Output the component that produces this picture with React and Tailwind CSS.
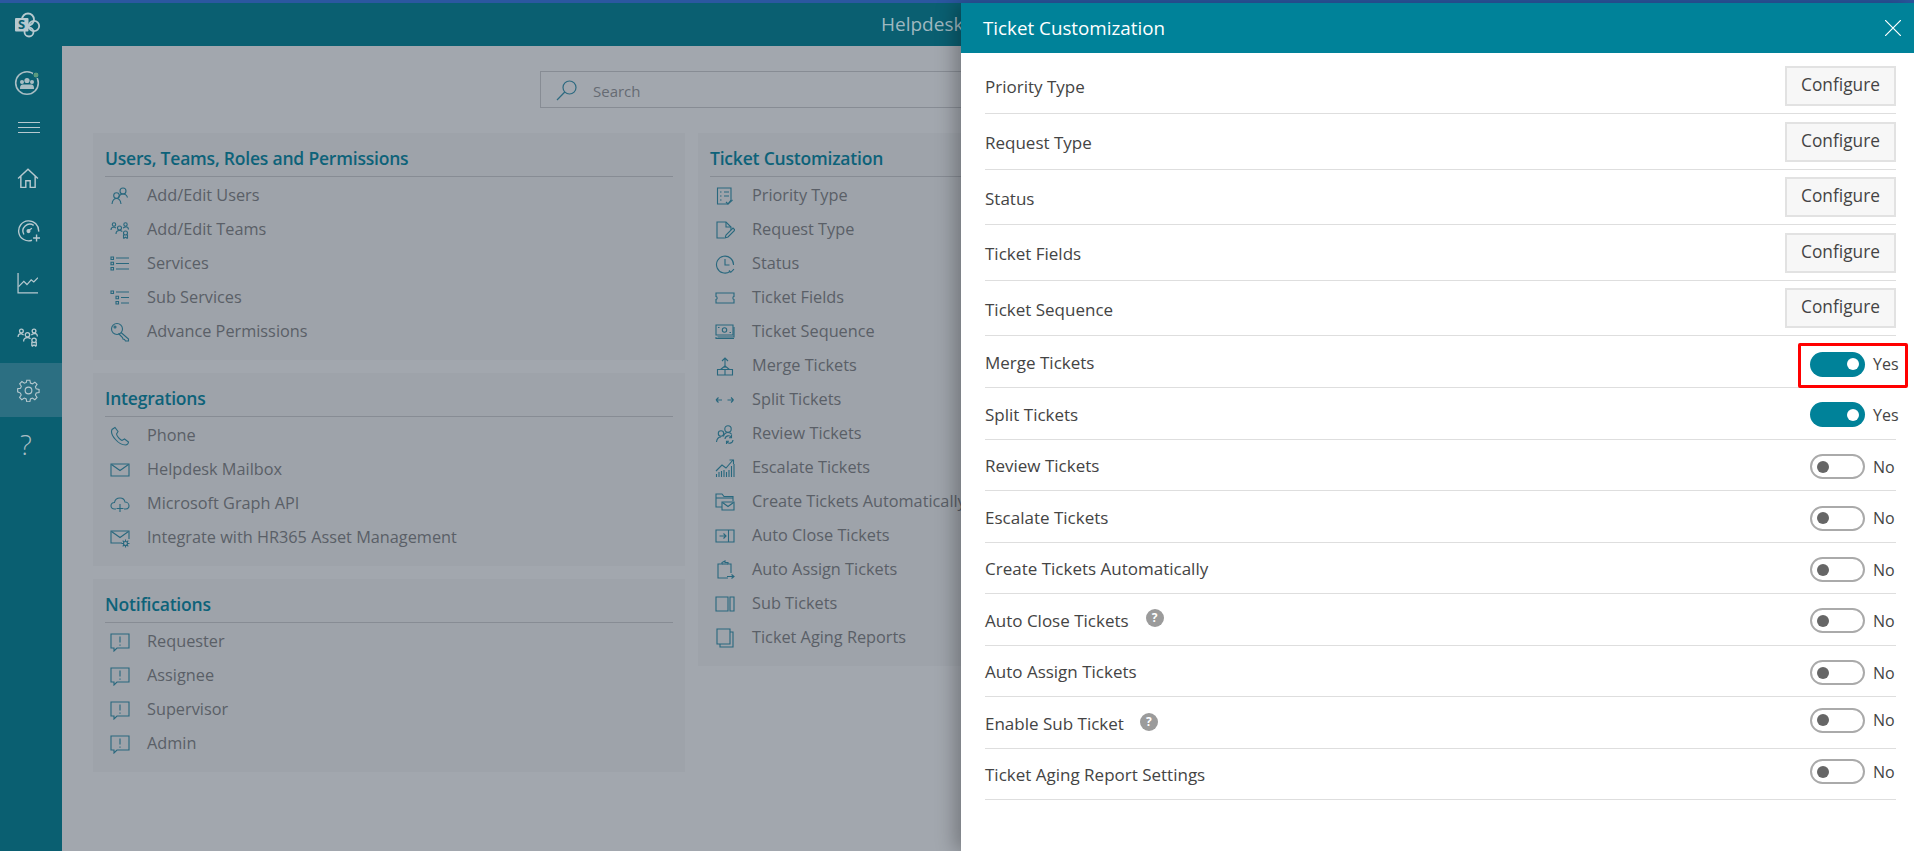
const FONT = "font-['Open_Sans',sans-serif]"

function Ico({ children, size = 20, view = 20, stroke = '#29687e', width = 1.1 }) {
  return (
    <svg width={size} height={size} viewBox={`0 0 ${view} ${view}`} fill="none" stroke={stroke} strokeWidth={width} className="shrink-0">
      {children}
    </svg>
  )
}

const itemIcons = {
  users: <><circle cx="13" cy="5" r="3" /><path d="M8.500 12c.6-2.400 2.400-4 4.500-4s3.800 1.200 4.500 3.500" /><circle cx="6.500" cy="9.500" r="2.800" /><path d="M2 18c.4-3 2.200-5.500 4.500-5.500S10.600 15 11 18" /></>,
  teams: <><circle cx="4" cy="4.500" r="1.700" /><circle cx="15.500" cy="4.500" r="1.700" /><circle cx="9.500" cy="8" r="2" /><path d="M1 10c0-2 1-3 3-3l2 1M18.500 9.500c0-2-1-2.800-3-2.800l-2.500 1.300M6 14c0-2.500 1.500-3.500 3.500-3.500 1.200 0 2 .3 2.800 1" /><circle cx="15.500" cy="13" r="2" /><path d="M13.500 18.500v-4M17.500 18.500v-4M13.500 18.500l2-1.300 2 1.300" /></>,
  services: <><path d="M1 3h2.500v2.500H1zM1 8.200h2.500v2.500H1zM1 13.500h2.500V16H1z" /><path d="M6 4h13M6 9.500h13M6 15h13" /></>,
  subservices: <><path d="M1 3h2.500v2.500H1zM6 8.200h2.500v2.500H6zM6 13.500h2.500V16H6z" /><path d="M6 4h13M11 9.500h8M11 15h8" /></>,
  key: <><circle cx="7" cy="7" r="5.500" /><circle cx="5" cy="5" r="1" /><path d="M11 10.500l7.500 6.500v2h-3l-1-1.500-1.500-.5-.5-1.500-4-4" /></>,
  phone: <path d="M5 1.500L2 3.500c-1 2 0 6 3.500 10s7 5.500 10 5.500c1.500 0 3-1.500 3-3l-4-3-2.500 1.500c-2-.7-5-4-5.500-6.500L8 5.500z" />,
  mail: <><path d="M1 4h18v12H1z" /><path d="M1.500 4.500L10 10.500l8.500-6" /></>,
  cloud: <><path d="M6 15H4.500C2.500 15 1 13.500 1 11.800s1.500-3.300 3.500-3.300C5 5.500 7.500 4 10 4s4.500 1.500 5 4c2 0 4 1.500 4 3.800S17.500 15 15.500 15H14" /><path d="M10 10v8M6.500 14.500h7" /></>,
  mailgear: <><path d="M12 15H1V3h18v8" /><path d="M1.500 3.500L10 9.500l8.500-6" /><circle cx="15.500" cy="15.500" r="2" /><path d="M15.500 11.500v2M15.500 17.500v2M11.500 15.500h2M17.500 15.500h2M12.700 12.700l1.400 1.400M16.900 16.900l1.400 1.400M18.300 12.700l-1.400 1.400M14.100 16.900l-1.400 1.400" /></>,
  alert: <><path d="M1 2h18v14H7l-3 3v-3H1z" strokeWidth="1.100" /><path d="M10 4.500v6M10 12.500v1.300" /></>,
  priority: <><path d="M2.500 2h13.500v12l-3 4h-10.500z" /><path d="M5 6h1.500M9 6h5M5 10h1.500M9 10h5M5 14h1.500" /><path d="M11 16l2 2 4.500-4" /></>,
  request: <><path d="M9 18H2V2h9l5 5v3" /><path d="M11 2v5h5" /><path d="M10 18l1-3 7-7 2 2-7 7z" /></>,
  status: <><path d="M15 17.500A8.500 8.500 0 1 1 18.500 11" /><path d="M10 5v6h4.500" /><path d="M14 16.500l1.800 1.800 3.200-3.200" /></>,
  ticket: <path d="M1 5h18v3.500c-1.500 0-1.500 3 0 3V15H1v-3.500c1.500 0 1.500-3 0-3z" />,
  money: <><path d="M1 3h17v10H1z" /><circle cx="9.500" cy="8" r="2.200" /><path d="M3 5.500h1.500M14.500 10.500H16" /><path d="M19 5v10H2.500M1 15v1.500h18" /></>,
  merge: <><path d="M10 12V2M7 5l3-3 3 3" /><path d="M10 10l-4.500 3.500M10 10l4.500 3.500" /><path d="M2.500 13.500h7.500V19H2.500zM10 13.500h7.500V19H10z" /></>,
  split: <><path d="M1 10h6M1 10l2.500-2.500M1 10l2.500 2.500M12.500 10h6M18.500 10L16 7.500M18.500 10L16 12.500" strokeWidth="1.100" /></>,
  review: <><circle cx="13" cy="5" r="3.200" /><path d="M8.500 12.500c.6-2.700 2.400-4 4.500-4 1.500 0 3 .6 3.800 2" /><circle cx="6" cy="9.500" r="2.700" /><path d="M1.500 18c.4-3 2-5 4.500-5" /><path d="M10 15a3.500 3.500 0 0 1 6.500-1.500M18 16a3.500 3.500 0 0 1-6.500 1.500M16.500 11v2.700h-2.500M11.500 20v-2.700h2.500" /></>,
  escalate: <><path d="M1.500 19v-3M4 19v-5M6.500 19v-6M9 19v-7M11.500 19v-5M14 19v-7M16.500 19V8M19 19V6" /><path d="M1 13l6-6 4 3 7-8" /><path d="M14.500 2H18.500v4" /></>,
  folder: <><path d="M7 15H1V2h6l2 2.500h9V9" /><path d="M1 6h17" /><path d="M7 10h12v8H7z" /><path d="M7.500 10.500l5.500 4 5.500-4" /></>,
  close: <><path d="M1 4h18v12H1zM13.500 4v12" /><path d="M4.500 10H11M8.500 7.500L11 10l-2.500 2.500" /></>,
  assign: <><path d="M16 13V4h-3V2.500H10V1L7 2.500V4H3v14h10" /><path d="M7 4h6" /><path d="M12 16.500h7M16.500 14.500l2.500 2-2.500 2" /></>,
  sub: <><path d="M1 3h12v14H1zM15 3h4v14h-4z" /></>,
  aging: <><path d="M2 1h13v15H2z" /><path d="M15 4h3v15H5v-3" /></>,
}

const panels1 = [
  {
    title: 'Users, Teams, Roles and Permissions',
    items: [['users', 'Add/Edit Users'], ['teams', 'Add/Edit Teams'], ['services', 'Services'], ['subservices', 'Sub Services'], ['key', 'Advance Permissions']],
  },
  {
    title: 'Integrations',
    items: [['phone', 'Phone'], ['mail', 'Helpdesk Mailbox'], ['cloud', 'Microsoft Graph API'], ['mailgear', 'Integrate with HR365 Asset Management']],
  },
  {
    title: 'Notifications',
    items: [['alert', 'Requester'], ['alert', 'Assignee'], ['alert', 'Supervisor'], ['alert', 'Admin']],
  },
]

const ticketPanel = {
  title: 'Ticket Customization',
  items: [
    ['priority', 'Priority Type'], ['request', 'Request Type'], ['status', 'Status'], ['ticket', 'Ticket Fields'],
    ['money', 'Ticket Sequence'], ['merge', 'Merge Tickets'], ['split', 'Split Tickets'], ['review', 'Review Tickets'],
    ['escalate', 'Escalate Tickets'], ['folder', 'Create Tickets Automatically'], ['close', 'Auto Close Tickets'],
    ['assign', 'Auto Assign Tickets'], ['sub', 'Sub Tickets'], ['aging', 'Ticket Aging Reports'],
  ],
}

function SettingsPanel({ panel }) {
  return (
    <section className="bg-[#9ea3aa] px-3 pb-[11px] overflow-hidden">
      <h2 className="h-[44px] pt-[12px] border-b border-[#878c94] text-[17.500px] leading-[26px] font-semibold text-[#0d6279] tracking-[-0.2px]">{panel.title}</h2>
      <ul className="pt-[2px]">
        {panel.items.map(([icon, label]) => (
          <li key={label} className="h-[34px] flex items-center pl-[5px] gap-[17px] text-[16.300px] text-[#5a5f67] whitespace-nowrap">
            <Ico>{itemIcons[icon]}</Ico>
            <span className="-mt-[1px]">{label}</span>
          </li>
        ))}
      </ul>
    </section>
  )
}

function NavItem({ children }) {
  return <div className="h-[53px] flex items-center pl-[17px]">{children}</div>
}

function Sidebar() {
  const c = '#b7c9cf'
  return (
    <aside className="w-[62px] shrink-0 bg-[#0a5f71] flex flex-col">
      <div className="h-[44px] flex items-center pl-[14px] relative">
        <svg width="27" height="27" viewBox="0 0 27 27" fill="none">
          <circle cx="14" cy="7.500" r="6" stroke={c} strokeWidth="1.800" />
          <circle cx="20" cy="14" r="5.200" stroke={c} strokeWidth="1.800" />
          <circle cx="15" cy="20" r="4.500" stroke={c} strokeWidth="1.800" />
          <rect x="1" y="6" width="13.500" height="13.500" rx="1" fill={c} />
        </svg>
        <span className="absolute left-[18px] top-[11px] text-[13px] leading-[20px] font-bold text-[#0a5f71]">S</span>
      </div>
      <div className="h-[72px] flex items-center pl-[14px]">
        <svg width="26" height="26" viewBox="0 0 26 26" fill="none">
          <circle cx="13" cy="13" r="11.300" stroke="#a9bdc3" strokeWidth="1.600" />
          <circle cx="8" cy="12" r="2" fill="#a9bdc3" />
          <circle cx="18" cy="12" r="2" fill="#a9bdc3" />
          <circle cx="13" cy="10.500" r="2.600" fill="#a9bdc3" />
          <path d="M6 19c0-3.500 1-4.500 3-4.500h8c2 0 3 1 3 4.500z" fill="#a9bdc3" />
          <circle cx="22" cy="5" r="3" fill="#5a9a7e" stroke="#0a5f71" />
        </svg>
      </div>
      <div className="h-[32px] pl-[18px] pt-[3px] flex flex-col gap-[4px]">
        <div className="w-[22px] h-px bg-[#b7c9cf]" />
        <div className="w-[22px] h-px bg-[#b7c9cf]" />
        <div className="w-[22px] h-px bg-[#b7c9cf]" />
      </div>
      <NavItem>
        <Ico size={22} stroke={c} width={1.300}>
          <path d="M1 10.500L10 2l9 8.500M3.500 8.500V18.500h4.500v-6h4v6h4.500V8.500" />
        </Ico>
      </NavItem>
      <NavItem>
        <Ico size={23} stroke={c} width={1.200}>
          <path d="M13 18.500A8.700 8.700 0 1 1 18.800 11" />
          <path d="M14.500 5.500a6 6 0 0 0-8.500 8M10 10l3-2" />
          <circle cx="10" cy="10.500" r="1.200" fill={c} />
          <path d="M17 13.500v6M14 16.500h6" />
        </Ico>
      </NavItem>
      <NavItem>
        <Ico size={21} stroke={c} width={1.200}>
          <path d="M1 0v19h19" />
          <path d="M1.500 13l5-5 3 3 4-4.500 2.500 2 4-4" />
        </Ico>
      </NavItem>
      <NavItem>
        <Ico size={22} stroke={c} width={1.200}>{itemIcons.teams}</Ico>
      </NavItem>
      <div className="h-[54px] flex items-center pl-[17px] bg-[#2c6f82]">
        <svg width="23" height="23" viewBox="0 0 24 24" fill="none" stroke={c} strokeWidth="1.200">
          <circle cx="12" cy="12" r="3.500" />
          <path d="M10.300 1h3.400l.6 3.100 2.100.9 2.700-1.800 2.400 2.400-1.800 2.700.9 2.100 3.100.6v3.400l-3.100.6-.9 2.100 1.800 2.700-2.400 2.400-2.700-1.800-2.100.9-.6 3.100h-3.400l-.6-3.100-2.100-.9-2.700 1.800-2.400-2.400 1.800-2.700-.9-2.100L.4 13.700v-3.400l3.100-.6.9-2.100-1.800-2.700 2.400-2.400 2.700 1.800 2.100-.9z" transform="scale(.96) translate(.3 .3)" />
        </svg>
      </div>
      <NavItem>
        <span className="text-[28px] leading-none font-light text-[#a9bdc3] ml-[3px]">?</span>
      </NavItem>
    </aside>
  )
}

function Toggle({ on, label, shift = '' }) {
  return (
    <div className={`flex items-center ${shift}`}>
      <span className={`w-[55px] h-[25px] rounded-full flex items-center ${on ? 'bg-[#008299] justify-end pr-[6px]' : 'bg-white border-2 border-[#aaaaaa] justify-start pl-[5px]'}`}>
        <span className={`w-[12px] h-[12px] rounded-full ${on ? 'bg-white' : 'bg-[#666666]'}`} />
      </span>
      <span className="ml-[8px] w-[23px] text-[16px] font-normal text-[#444444] leading-none">{label}</span>
    </div>
  )
}

function HelpDot({ className }) {
  return (
    <span className={`w-[18px] h-[18px] rounded-full bg-[#9b9b9b] text-white text-[12px] leading-[18px] font-bold text-center ${className}`}>?</span>
  )
}

const rows = [
  { label: 'Priority Type', type: 'btn', h: 'h-[61px]', pad: 'pt-[5px]' },
  { label: 'Request Type', type: 'btn', h: 'h-[56px]' },
  { label: 'Status', type: 'btn', h: 'h-[55px]' },
  { label: 'Ticket Fields', type: 'btn', h: 'h-[56px]' },
  { label: 'Ticket Sequence', type: 'btn', h: 'h-[55px]' },
  { label: 'Merge Tickets', on: true, h: 'h-[52px]', shift: 'mt-[5px]' },
  { label: 'Split Tickets', on: true, h: 'h-[52px]', shift: 'mt-[2px]' },
  { label: 'Review Tickets', h: 'h-[51px]' },
  { label: 'Escalate Tickets', h: 'h-[52px]' },
  { label: 'Create Tickets Automatically', h: 'h-[51px]' },
  { label: 'Auto Close Tickets', h: 'h-[52px]', help: 'ml-[17px] -mt-[6px]', shift: 'mt-[2px]' },
  { label: 'Auto Assign Tickets', h: 'h-[51px]' },
  { label: 'Enable Sub Ticket', h: 'h-[52px]', help: 'ml-[16px] -mt-[4px]', shift: '-mt-[5px]' },
  { label: 'Ticket Aging Report Settings', h: 'h-[51px]', shift: '-mt-[5px]' },
]

function CustomizationDrawer() {
  return (
    <div className="absolute left-[961px] top-[3px] bottom-0 w-[953px] bg-white shadow-[-6px_0_18px_rgba(0,0,0,0.28)] flex flex-col">
      <header className="h-[50px] shrink-0 bg-[#008299] flex items-center justify-between pl-[22px] pr-[13px]">
        <h1 className="text-[18.800px] font-medium text-white">Ticket Customization</h1>
        <svg width="16" height="16" viewBox="0 0 16 16" stroke="#ffffff" strokeWidth="1.200"><path d="M0 0l16 16M16 0L0 16" /></svg>
      </header>
      <div className="ml-[24px] w-[911px]">
        {rows.map((r) => (
          <div key={r.label} className={`${r.h} ${r.pad || ''} border-b border-[#dedede] flex items-center justify-between text-[17px] text-[#444444]`}>
            <div className={`flex items-center ${r.type === 'btn' ? 'pt-[3px]' : 'pt-[2px]'}`}>
              <span>{r.label}</span>
              {r.help && <HelpDot className={r.help} />}
            </div>
            {r.type === 'btn' ? (
              <button className="w-[111px] h-[40px] pb-[2px] bg-[#f7f7f7] border-2 border-[#e2e2e2] text-[17.300px] font-normal text-[#444444]">Configure</button>
            ) : (
              <Toggle on={r.on} label={r.on ? 'Yes' : 'No'} shift={r.shift || 'mt-[3px]'} />
            )}
          </div>
        ))}
      </div>
      {/* red highlight drawn over the Merge Tickets toggle */}
      <div className="absolute left-[837px] top-[340px] w-[110px] h-[45px] border-[3px] border-[#ff0000] rounded-[2px]" />
    </div>
  )
}

export default function App() {
  return (
    <div className={`relative w-[1914px] h-[851px] overflow-hidden flex flex-col ${FONT}`}>
      <div className="h-[3px] shrink-0 bg-[#2b57a0]" />
      <div className="flex-1 flex min-h-0">
        <Sidebar />
        <div className="flex-1 flex flex-col min-w-0 bg-[#a2a7ae]">
          <header className="h-[43px] shrink-0 bg-[#0a5f71] pl-[819px] flex items-center">
            <span className="text-[19px] text-[#9fb8c0]">Helpdesk</span>
          </header>
          <div className="pt-[25px] pl-[31px]">
            <div className="ml-[447px] w-[896px] h-[37px] border border-[#878c94] flex items-center pl-[15px] gap-[15px]">
              <svg width="22" height="22" viewBox="0 0 22 22" fill="none" stroke="#2d6a80" strokeWidth="1.200">
                <circle cx="13.500" cy="8.500" r="6.500" />
                <path d="M8.800 13L1 21" />
              </svg>
              <span className="text-[15px] text-[#666b73] pt-[4px]">Search</span>
            </div>
            <div className="flex gap-[13px] mt-[25px]">
              <div className="w-[592px] flex flex-col gap-[13px]">
                {panels1.map((p) => <SettingsPanel key={p.title} panel={p} />)}
              </div>
              <div className="w-[592px]">
                <SettingsPanel panel={ticketPanel} />
              </div>
            </div>
          </div>
        </div>
      </div>
      <CustomizationDrawer />
    </div>
  )
}
